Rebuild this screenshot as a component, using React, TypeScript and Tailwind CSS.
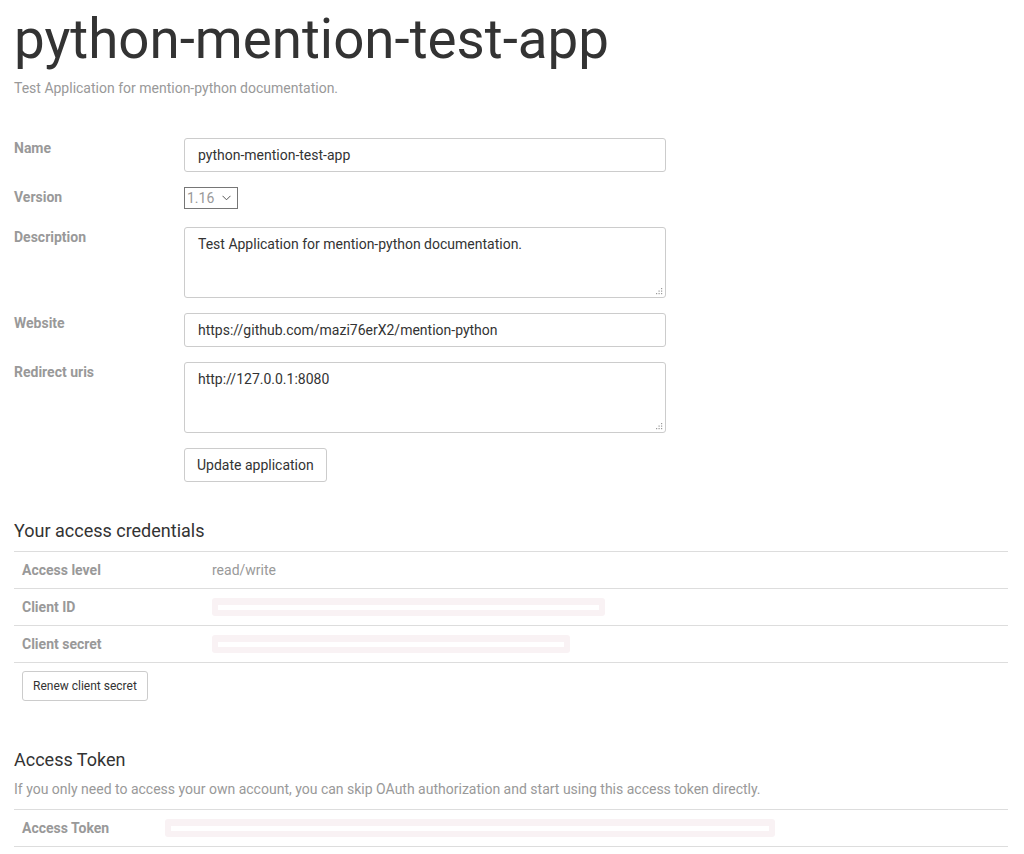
import React from "react";

const Redacted = ({ width }: { width: number }) => (
  <span
    className="inline-flex items-center h-[18px] rounded-[3px] bg-[#f9f2f4] px-[6px]"
    style={{ width }}
  >
    <span className="block h-[5px] w-full bg-white" />
  </span>
);

const FormRow = ({
  label,
  children,
}: {
  label: string;
  children: React.ReactNode;
}) => (
  <div className="flex">
    <label className="w-[170px] shrink-0 text-[14px] leading-[20px] font-bold text-[#999]">
      {label}
    </label>
    <div className="w-[482px]">{children}</div>
  </div>
);

const Grip = () => (
  <svg
    className="pointer-events-none absolute right-[3px] bottom-[3px]"
    width="7"
    height="7"
    viewBox="0 0 7 7"
    fill="#999"
  >
    <rect x="5" y="0" width="1.2" height="1.2" />
    <rect x="2.5" y="2.5" width="1.2" height="1.2" />
    <rect x="5" y="2.5" width="1.2" height="1.2" />
    <rect x="0" y="5" width="1.2" height="1.2" />
    <rect x="2.5" y="5" width="1.2" height="1.2" />
    <rect x="5" y="5" width="1.2" height="1.2" />
  </svg>
);

const inputCls =
  "w-full h-[34px] rounded-[3px] border border-[#ccc] bg-white px-[13px] text-[14px] text-[#333] outline-none";
const textareaCls =
  "block w-full h-[71px] rounded-[3px] border border-[#ccc] bg-white px-[13px] pt-[6px] text-[14px] leading-[20px] text-[#333] outline-none resize-none";

const TextArea = ({ value }: { value: string }) => (
  <div className="relative">
    <textarea className={textareaCls} defaultValue={value} />
    <Grip />
  </div>
);

const CredRow = ({
  label,
  children,
  labelWidth,
}: {
  label: string;
  children: React.ReactNode;
  labelWidth: string;
}) => (
  <div className="flex h-[37px] items-center border-b border-[#ddd] px-2">
    <div className={`${labelWidth} shrink-0 text-[14px] font-bold text-[#999]`}>
      {label}
    </div>
    <div className="flex text-[14px] text-[#999]">{children}</div>
  </div>
);

export default function App() {
  return (
    <div className="min-h-[854px] bg-white px-[14px] font-['Roboto',sans-serif] text-[#333]">
      <h1 className="pt-[4px] text-[54.7px] leading-[70px] font-normal text-[#333]">
        python-mention-test-app
      </h1>
      <p className="mt-[4px] text-[14px] leading-[20px] text-[#999]">
        Test Application for mention-python documentation.
      </p>

      <form className="mt-[40px] flex flex-col gap-[15px]">
        <FormRow label="Name">
          <input className={inputCls} defaultValue="python-mention-test-app" />
        </FormRow>
        <FormRow label="Version">
          <div className="flex pb-[3px]">
            <div className="flex h-[22px] w-[54px] items-center gap-[8px] border border-[#767676] pl-[2px] text-[14px] text-[#999]">
              1.16
              <svg width="9" height="6" viewBox="0 0 9 6" fill="none">
                <path d="M0.5 0.8 L4.5 4.8 L8.5 0.8" stroke="#555" strokeWidth="1" />
              </svg>
            </div>
          </div>
        </FormRow>
        <FormRow label="Description">
          <TextArea value="Test Application for mention-python documentation." />
        </FormRow>
        <FormRow label="Website">
          <input
            className={inputCls}
            defaultValue="https://github.com/mazi76erX2/mention-python"
          />
        </FormRow>
        <FormRow label="Redirect uris">
          <TextArea value="http://127.0.0.1:8080" />
        </FormRow>
        <div className="pl-[170px]">
          <button
            type="button"
            className="h-[34px] rounded-[3px] border border-[#ccc] bg-white px-[12px] text-[14px] text-[#333]"
          >
            Update application
          </button>
        </div>
      </form>

      <h3 className="mt-[37px] text-[18px] leading-[24px] text-[#333]">
        Your access credentials
      </h3>
      <div className="mt-[8px] w-[994px] border-t border-[#ddd]">
        <CredRow label="Access level" labelWidth="w-[190px]">
          read/write
        </CredRow>
        <CredRow label="Client ID" labelWidth="w-[190px]">
          <Redacted width={393} />
        </CredRow>
        <CredRow label="Client secret" labelWidth="w-[190px]">
          <Redacted width={358} />
        </CredRow>
      </div>
      <div className="px-2 pt-[8px]">
        <button
          type="button"
          className="h-[30px] rounded-[3px] border border-[#ccc] bg-white px-[10px] text-[12px] text-[#333]"
        >
          Renew client secret
        </button>
      </div>

      <h3 className="mt-[47px] text-[18px] leading-[24px] text-[#333]">
        Access Token
      </h3>
      <p className="mt-[7px] text-[14px] leading-[20px] text-[#999]">
        If you only need to access your own account, you can skip OAuth
        authorization and start using this access token directly.
      </p>
      <div className="mt-[10px] w-[994px] border-t border-[#ddd]">
        <CredRow label="Access Token" labelWidth="w-[143px]">
          <Redacted width={610} />
        </CredRow>
      </div>
    </div>
  );
}
